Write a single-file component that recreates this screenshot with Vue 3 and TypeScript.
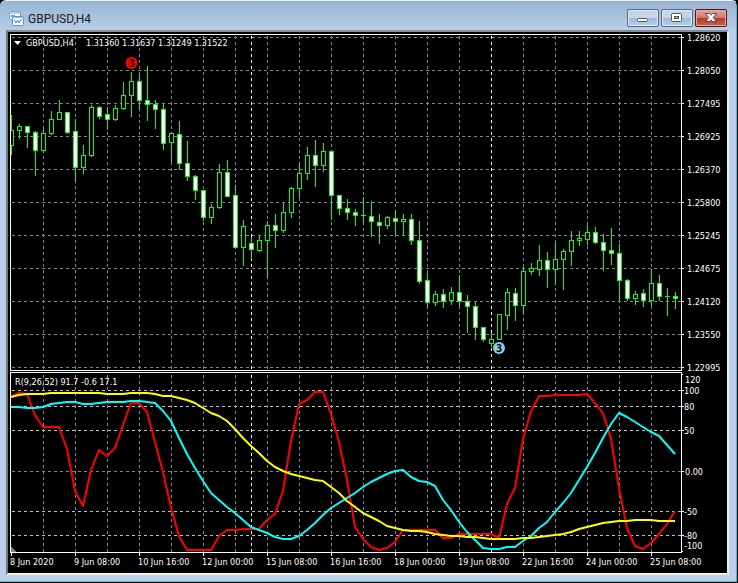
<script setup lang="ts">
interface Candle {
  x: number
  high: number
  top: number
  bottom: number
  low: number
  bear: boolean
}

const STEP = 8
const FIRST_BAR = 11

// high, body top, body bottom, low, falling bar (1) or rising bar (0)
const bars: number[][] = [
  [115, 130, 146, 155, 0], [124, 126, 131, 139, 0], [126, 126, 133, 148, 1], [131, 132, 151, 176, 1],
  [129, 133, 151, 153, 0], [111, 119, 134, 135, 0], [100, 112, 120, 120, 0], [112, 112, 133, 134, 1],
  [119, 131, 168, 181, 1], [145, 155, 168, 174, 0], [105, 107, 156, 157, 0], [106, 107, 117, 119, 1],
  [107, 114, 120, 130, 1], [105, 108, 120, 121, 0], [82, 95, 109, 110, 0], [72, 81, 96, 117, 0],
  [74, 81, 101, 109, 1], [66, 100, 105, 121, 1], [100, 104, 110, 129, 1], [103, 109, 144, 150, 1],
  [132, 133, 143, 162, 0], [121, 134, 164, 170, 1], [141, 163, 177, 181, 1], [175, 176, 191, 200, 1],
  [190, 190, 218, 221, 1], [204, 207, 218, 224, 0], [164, 172, 208, 209, 0], [160, 172, 197, 197, 1],
  [185, 195, 248, 248, 1], [220, 226, 248, 266, 0], [237, 243, 250, 259, 1], [235, 240, 251, 252, 0],
  [221, 225, 241, 278, 0], [214, 225, 231, 248, 1], [203, 212, 231, 233, 0], [187, 188, 213, 218, 0],
  [163, 173, 189, 198, 0], [147, 155, 174, 180, 0], [140, 155, 166, 187, 1], [143, 151, 166, 172, 0],
  [151, 151, 196, 220, 1], [195, 195, 209, 215, 1], [199, 208, 213, 220, 1], [209, 212, 216, 226, 1],
  [197, 215, 216, 223, 0], [201, 216, 222, 237, 1], [214, 222, 226, 244, 1], [216, 217, 226, 229, 0],
  [210, 218, 222, 235, 1], [214, 219, 222, 236, 0], [214, 219, 241, 245, 1], [221, 240, 282, 284, 1],
  [273, 280, 303, 308, 1], [291, 294, 303, 306, 0], [289, 294, 302, 308, 1], [287, 292, 301, 305, 0],
  [275, 292, 302, 306, 1], [295, 301, 307, 333, 1], [302, 306, 328, 340, 1], [327, 327, 340, 342, 1],
  [333, 339, 344, 347, 0], [314, 314, 340, 340, 0], [288, 292, 316, 330, 0], [288, 293, 306, 321, 1],
  [267, 271, 306, 314, 0], [263, 268, 272, 275, 0], [245, 260, 270, 276, 0], [252, 260, 270, 288, 1],
  [242, 259, 270, 285, 0], [249, 251, 260, 290, 0], [231, 240, 252, 266, 0], [231, 238, 241, 246, 0],
  [225, 232, 240, 245, 0], [227, 232, 243, 244, 1], [234, 242, 251, 271, 1], [228, 250, 254, 265, 1],
  [244, 253, 281, 301, 1], [279, 280, 299, 301, 1], [291, 294, 299, 305, 0], [289, 293, 301, 307, 1],
  [269, 283, 301, 306, 0], [275, 283, 297, 301, 1], [288, 296, 297, 316, 0], [292, 296, 299, 309, 1],
]

const candles: Candle[] = bars.map(([high, top, bottom, low, bear], i) => ({
  x: FIRST_BAR + i * STEP, high, top, bottom, low, bear: bear === 1,
}))

const red = [
  396, 393, 394, 415, 427, 427, 427, 449, 491, 506, 470, 450, 456, 448, 425, 403, 403, 412, 442, 472, 508, 536,
  550, 550, 550, 550, 536, 530, 530, 529, 529, 529, 520, 514, 491, 441, 404, 400, 392, 392, 414, 442, 480, 527,
  539, 547, 550, 548, 542, 530, 530, 530, 530, 530, 538, 538, 534, 534, 534, 534, 534, 538, 504, 488, 439, 411,
  396, 396, 395, 395, 395, 395, 394, 403, 413, 439, 488, 528, 546, 549, 543, 534, 524, 511,
]
const cyan = [
  407, 407, 408, 408, 407, 404, 403, 402, 402, 404, 404, 403, 402, 402, 402, 401, 401, 402, 403, 411, 421, 438,
  454, 468, 481, 493, 500, 507, 513, 520, 527, 530, 533, 537, 539, 539, 536, 530, 523, 515, 508, 503, 498, 493,
  487, 482, 478, 474, 471, 470, 477, 481, 482, 486, 500, 510, 522, 532, 540, 548, 549, 549, 547, 547, 541, 536,
  528, 522, 512, 503, 493, 480, 467, 453, 438, 424, 413, 417, 422, 427, 432, 436, 445, 454,
]
const yellow = [
  397, 395, 394, 394, 394, 393, 393, 393, 393, 393, 393, 393, 394, 394, 394, 393, 393, 393, 394, 396, 396, 398,
  400, 403, 408, 413, 416, 421, 429, 438, 446, 453, 461, 467, 471, 474, 476, 478, 480, 481, 487, 493, 501, 507,
  513, 517, 521, 526, 528, 530, 531, 531, 532, 534, 535, 536, 536, 537, 537, 538, 539, 539, 539, 539, 538, 538,
  537, 536, 535, 534, 532, 529, 527, 525, 523, 522, 521, 521, 520, 520, 520, 521, 521, 521,
]
const toPoints = (ys: number[]): string => ys.map((y, i) => `${FIRST_BAR + i * STEP},${y}`).join(' ')

const oscillators = [
  { color: '#ff0000', points: toPoints(red) },
  { color: '#00ffff', points: toPoints(cyan) },
  { color: '#ffff00', points: toPoints(yellow) },
]

const prices = ['1.28620', '1.28050', '1.27495', '1.26925', '1.26370', '1.25800', '1.25245', '1.24675', '1.24120', '1.23550', '1.22995']
  .map((label, i) => ({ label, y: 37 + i * 33 }))

const levels = [
  { label: '100', y: 390, text: 394, x: 684, major: true },
  { label: '80', y: 406, text: 410, x: 684, major: true },
  { label: '50', y: 430, text: 434, x: 684, major: true },
  { label: '0.00', y: 471, text: 475, x: 685, major: false },
  { label: '-50', y: 511, text: 515, x: 684, major: true },
  { label: '-80', y: 535, text: 539, x: 684, major: true },
]

const times = ['8 Jun 2020', '9 Jun 08:00', '10 Jun 16:00', '12 Jun 00:00', '15 Jun 08:00', '16 Jun 16:00', '18 Jun 00:00', '19 Jun 08:00', '22 Jun 16:00', '24 Jun 00:00', '25 Jun 08:00']
  .map((label, i) => ({ label, x: 11 + i * 64 }))

const columns = Array.from({ length: 20 }, (_, i) => 43 + i * 32)
const separators = [251, 491]
</script>

<template>
  <main class="window">
    <header class="titlebar">
      <svg class="app-icon" viewBox="0 0 15 15" aria-hidden="true">
        <rect x="0.5" y="0.5" width="11" height="8" rx="1" fill="#fff" stroke="#6f9ee6" />
        <path d="M1 2h10" stroke="#6f9ee6" stroke-width="1" />
        <path d="M2 6l1-2 1 2 1-2 1 2" fill="none" stroke="#4d86dc" />
        <rect x="3.5" y="5.5" width="11" height="9" rx="1" fill="#fff" stroke="#5b90e2" />
        <path d="M4 6.500h10" stroke="#9dbff0" stroke-width="1" />
        <path d="M5 8.500l2 3.500 1.500-3 1.500 3 1.500-3h1.500" fill="none" stroke="#3f7cd8" />
      </svg>
      <h1 class="title">GBPUSD,H4</h1>
      <div class="controls">
        <button type="button" class="control" aria-label="Minimize">
          <svg viewBox="0 0 30 16" aria-hidden="true">
            <rect x="9.500" y="8.500" width="10" height="3" rx="1" fill="#fff" stroke="#4c5666" />
          </svg>
        </button>
        <button type="button" class="control" aria-label="Restore">
          <svg viewBox="0 0 30 16" aria-hidden="true">
            <rect x="9.500" y="3.500" width="10" height="8" rx="1" fill="#fff" stroke="#4c5666" />
            <rect x="12.500" y="6.500" width="4" height="2" fill="#9fb6d0" stroke="#4c5666" />
          </svg>
        </button>
        <button type="button" class="control close" aria-label="Close">
          <svg viewBox="0 0 30 16" aria-hidden="true">
            <path d="M9.500 3.500h4l1.500 1.700 1.500-1.700h4l-3.300 4 3.300 4h-4L15 9.800l-1.500 1.700h-4l3.300-4z" fill="#fff" stroke="#5a4650" />
          </svg>
        </button>
      </div>
    </header>

    <section class="frame">
      <svg class="chart" viewBox="8 32 719 541" role="img" aria-label="GBPUSD H4 chart">
        <defs>
          <clipPath id="plot"><rect x="11" y="35" width="670" height="517" /></clipPath>
        </defs>
        <g shape-rendering="crispEdges">
          <g class="grid">
            <path v-for="p in prices" :key="p.label" :d="`M12 ${p.y + 0.5}H681`" />
            <path v-for="x in columns" :key="x" :d="`M${x + 0.5} 36V370M${x + 0.5} 375V552`" />
            <path v-for="l in levels" :key="l.label" :class="{ major: l.major }" :d="`M12 ${l.y + 0.5}H681`" />
          </g>
          <path v-for="x in separators" :key="x" class="separator" :d="`M${x + 0.5} 36V370M${x + 0.5} 375V552`" />

          <g clip-path="url(#plot)">
            <g v-for="c in candles" :key="c.x">
              <rect class="lime" :x="c.x" :y="c.high" width="1" :height="c.low - c.high" />
              <rect class="lime" :x="c.x - 2" :y="c.top" width="5" :height="c.bottom - c.top" />
              <rect
                v-if="c.bottom - c.top > 2"
                :class="c.bear ? 'bear' : 'bull'"
                :x="c.x - 1" :y="c.top + 1" width="3" :height="c.bottom - c.top - 2"
              />
            </g>
            <polyline
              v-for="o in oscillators" :key="o.color"
              :points="o.points" :stroke="o.color" fill="none" stroke-width="2" stroke-linejoin="round"
              shape-rendering="auto"
            />
            <path d="M11 547l5 5h-5z" fill="#778899" />
          </g>

          <g class="axis">
            <rect x="10.500" y="34.500" width="671" height="336" />
            <rect x="10.500" y="372.500" width="671" height="180" />
            <path v-for="p in prices" :key="p.label" :d="`M682 ${p.y + 0.5}h2`" />
            <path v-for="l in levels" :key="l.label" :d="`M682 ${l.y + 0.5}h2`" />
            <path d="M682 374.500h1M682 551.500h1" />
            <path v-for="t in times" :key="t.label" :d="`M${t.x + 0.5} 553v3`" />
          </g>
        </g>

        <circle cx="131.500" cy="63" r="6" fill="#ff0000" />
        <text class="mark" x="131.500" y="67">3</text>
        <circle cx="499" cy="348" r="6" fill="#87ceeb" />
        <text class="mark" x="499" y="352">3</text>

        <g class="labels">
          <path d="M14 41h7l-3.500 4z" />
          <text x="26" y="46">GBPUSD,H4</text>
          <text x="86" y="46">1.31360 1.31637 1.31249 1.31522</text>
          <text x="15" y="385">R(9,26,52) 91.7 -0.6 17.1</text>
          <text v-for="p in prices" :key="p.label" x="687" :y="p.y + 4">{{ p.label }}</text>
          <text x="685" y="383">120</text>
          <text v-for="l in levels" :key="l.label" :x="l.x" :y="l.text">{{ l.label }}</text>
          <text x="684" y="549">-100</text>
          <text v-for="t in times" :key="t.label" :x="t.x - 1" y="565">{{ t.label }}</text>
        </g>
      </svg>
    </section>
  </main>
</template>

<style>
body {
  margin: 0;
  background: #000;
}
</style>

<style scoped>
.window {
  box-sizing: border-box;
  padding: 0 8px 7px 0;
  border-top: 1px solid #eef3f8;
  border-right: 1px solid #000;
  border-bottom: 1px solid #000;
  border-radius: 6px 6px 0 0;
  background: linear-gradient(#98b4d2, #b9d1ea 32px, #b9d1ea);
  box-shadow: inset -1px -1px #2cc5e8;
}
.titlebar {
  display: flex;
  align-items: center;
  height: 29px;
  padding: 0 2px 0 9px;
  gap: 4px;
}
.app-icon {
  width: 15px;
  height: 15px;
  margin-top: 6px;
}
.title {
  flex: 1;
  margin: 6px 0 0;
  font-family: Roboto, "Open Sans", sans-serif;
  font-size: 12px;
  line-height: 16px;
  font-weight: 400;
  color: #1b1b1b;
}
.controls {
  display: flex;
  gap: 2px;
  margin-top: 5px;
}
.control {
  box-sizing: border-box;
  width: 32px;
  height: 18px;
  padding: 0;
  border: 1px solid #5a6a80;
  border-radius: 2px;
  background: linear-gradient(#c4d5e8 50%, #9db8d4 50%, #b9d1ea);
  box-shadow: inset 0 0 0 1px #dce8f4;
}
.control svg {
  display: block;
  width: 30px;
  height: 16px;
}
.close {
  border-color: #4d1622;
  background: linear-gradient(#e3a297, #d3796b 50%, #b53622 50%, #cc6350);
  box-shadow: inset 0 0 0 1px #e5a79f;
}
.frame {
  border: 2px solid;
  border-color: #8d8d8d #f4f1ec #f4f1ec #777;
  margin-left: 6px;
  background: #000;
}
.chart {
  display: block;
  width: 100%;
  height: auto;
}
.grid path {
  stroke: #778899;
  stroke-dasharray: 3 3;
}
.grid .major {
  stroke: #c0c0c0;
}
.separator {
  stroke: #fff;
  stroke-dasharray: 3 3;
}
.lime {
  fill: #00ff00;
}
.bear {
  fill: #fff;
}
.bull {
  fill: #000;
}
.axis rect,
.axis path {
  fill: none;
  stroke: #fff;
}
.labels {
  fill: #fff;
  font-family: "DejaVu Sans Condensed", "Noto Sans", sans-serif;
  font-size: 9px;
}
.mark {
  fill: #000;
  font-family: "Noto Sans", sans-serif;
  font-size: 10px;
  font-weight: 700;
  text-anchor: middle;
}
</style>
